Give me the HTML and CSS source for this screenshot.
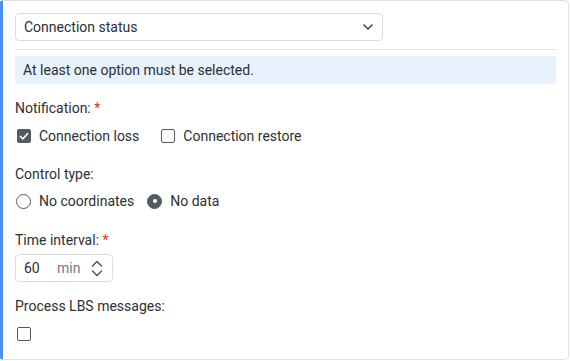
FILE: index.html
```html
<!DOCTYPE html>
<html>
<head>
<title>Notification settings</title>
<link rel="stylesheet" href="styles.css">
</head>
<body>

<div class="card">
	<div class="select">
		<span>Connection status</span>
		<svg class="chevron" width="10" height="6" viewBox="0 0 10 6"><path d="M1 1l4 4 4-4" fill="none" stroke="#444" stroke-width="1.6" stroke-linecap="round" stroke-linejoin="round"/></svg>
	</div>

	<div class="divider"></div>

	<div class="info">At least one option must be selected.</div>

	<div class="field notif">
		<div class="label">Notification: <span class="req">*</span></div>
		<div class="options">
			<label class="opt"><span class="box checked"><svg width="10" height="8" viewBox="0 0 10 8"><path d="M1 4l2.8 2.8L9 1.3" fill="none" stroke="#fff" stroke-width="1.6"/></svg></span>Connection loss</label>
			<label class="opt"><span class="box"></span>Connection restore</label>
		</div>
	</div>

	<div class="field control">
		<div class="label">Control type:</div>
		<div class="options">
			<label class="opt radio-opt"><span class="radio"></span>No coordinates</label>
			<label class="opt radio-opt"><span class="radio on"></span>No data</label>
		</div>
	</div>

	<div class="field time">
		<div class="label">Time interval: <span class="req">*</span></div>
		<div class="number">
			<span class="val">60</span>
			<span class="unit">min</span>
			<svg width="12" height="17" viewBox="0 0 12 17"><path d="M1.5 6l4.5-4.5 4.5 4.5M1.5 11l4.5 4.5 4.5-4.5" fill="none" stroke="#555" stroke-width="1.5" stroke-linecap="round" stroke-linejoin="round"/></svg>
		</div>
	</div>

	<div class="field lbs">
		<div class="label">Process LBS messages:</div>
		<div class="options">
			<label class="opt"><span class="box"></span></label>
		</div>
	</div>
</div><!-- end card -->

</body>
</html>
```

FILE: styles.css
```css
body {
margin: 0;
font-family: Roboto, "Noto Sans", Arial, sans-serif;
font-size: 14px;
color: #2d2f33;
background: #fff;
}

.card {
box-sizing: border-box;
width: 569px;
height: 360px;
border: 1px solid #e2e2e2;
border-left: 3px solid #4b8ff0;
border-radius: 3px 5px 5px 3px;
padding: 12px 12px 0 12px;
}

.select {
box-sizing: border-box;
width: 368px;
height: 28px;
border: 1px solid #dcdcdc;
border-radius: 4px;
display: flex;
align-items: center;
justify-content: space-between;
padding: 0 8px 0 8px;
}

.chevron {
margin-right: 1px;
}

.divider {
height: 1px;
background: #e3e3e3;
margin-top: 8px;
}

.info {
margin-top: 6px;
height: 28px;
line-height: 28px;
background: #e7f2fc;
border-radius: 3px;
padding: 0 8px;
}

.label {
height: 20px;
line-height: 20px;
}

.req {
color: #e0302a;
}

.options {
display: flex;
margin-top: 7px;
}

.notif .options {
margin-top: 8px;
}

.opt {
display: flex;
align-items: center;
height: 20px;
margin-right: 20px;
}

.box {
box-sizing: border-box;
width: 14px;
height: 14px;
border: 1.5px solid #555a63;
border-radius: 2px;
margin: 0 8px 0 2px;
display: flex;
align-items: center;
justify-content: center;
}

.box.checked {
background: #555a63;
}

.radio-opt {
margin-right: 12px;
}

.radio {
box-sizing: border-box;
width: 15px;
height: 15px;
border: 1.3px solid #555a63;
border-radius: 50%;
margin: 0 8px 0 1px;
position: relative;
}

.radio.on {
background: #555a63;
}

.radio.on::after {
content: "";
position: absolute;
left: 4.5px;
top: 4.5px;
width: 4px;
height: 4px;
border-radius: 50%;
background: #fff;
}

.notif {
margin-top: 14px;
}

.control {
margin-top: 18px;
}

.time {
margin-top: 19px;
}

.lbs {
margin-top: 14px;
}

.lbs .options {
margin-top: 8px;
}

.number {
box-sizing: border-box;
margin-top: 4px;
width: 98px;
height: 28px;
border: 1px solid #dcdcdc;
border-radius: 4px;
display: flex;
align-items: center;
padding: 0 9px 0 8px;
}

.val {
width: 33px;
}

.unit {
color: #777;
flex: 1;
}
```
